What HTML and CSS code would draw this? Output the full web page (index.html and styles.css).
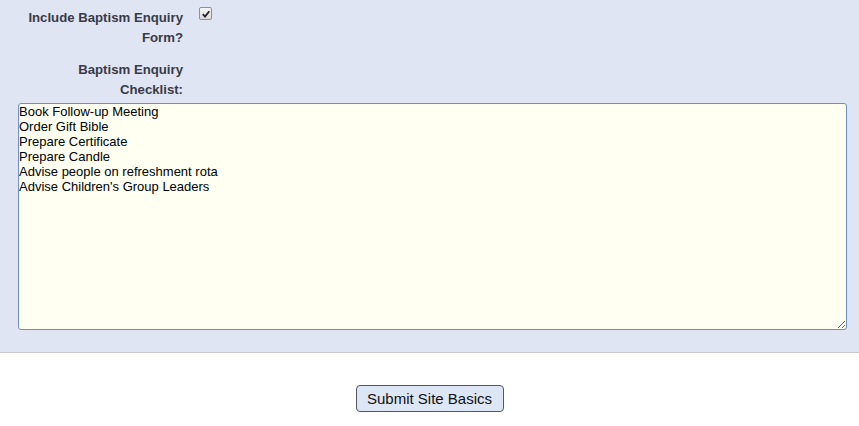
FILE: index.html
```html
<!DOCTYPE html>
<html lang="en">
<head>
<meta charset="utf-8">
<title>Site Basics</title>
<link rel="stylesheet" href="styles.css">
</head>
<body>
<form class="form">
  <div class="panel">
    <div class="row">
      <label class="label">Include Baptism Enquiry Form?</label>
      <div class="field">
        <span class="checkbox" role="checkbox" aria-checked="true">
          <svg width="8" height="8" viewBox="0 0 8 8"><path d="M0.8 4.2 L3 6.6 L7.3 1.2" fill="none" stroke="#222" stroke-width="1.8"/></svg>
        </span>
      </div>
    </div>
    <div class="row row-gap">
      <label class="label">Baptism Enquiry Checklist:</label>
    </div>
    <textarea class="checklist" spellcheck="false">Book Follow-up Meeting
Order Gift Bible
Prepare Certificate
Prepare Candle
Advise people on refreshment rota
Advise Children's Group Leaders</textarea>
  </div>
  <div class="actions">
    <button type="button" class="submit">Submit Site Basics</button>
  </div>
</form>
</body>
</html>
```
FILE: styles.css
```css
html, body {
  margin: 0;
  padding: 0;
  background: #ffffff;
}
body {
  font-family: "Liberation Sans", Arial, sans-serif;
}
.panel {
  background: #dfe5f3;
  border-bottom: 1px solid #c9c9d2;
  padding: 8px 12px 22px 18px;
  display: flex;
  flex-direction: column;
}
.row {
  display: grid;
  grid-template-columns: 165px 1fr;
  column-gap: 16px;
}
.row-gap {
  margin-top: 12px;
}
.label {
  font-size: 13.2px;
  font-weight: bold;
  line-height: 20px;
  color: #3a3a46;
  text-align: right;
}
.field {
  display: flex;
  align-items: flex-start;
}
.checkbox {
  box-sizing: border-box;
  width: 13px;
  height: 13px;
  margin-top: -1px;
  border: 1px solid #8e8f98;
  border-radius: 2px;
  background: linear-gradient(#f6f6f6, #dcdcdc);
  display: flex;
  align-items: center;
  justify-content: center;
}
.checklist {
  box-sizing: border-box;
  margin-top: 3px;
  width: 829px;
  height: 227px;
  padding: 0;
  border: 1px solid #6f8fc2;
  border-radius: 3px;
  background: #fffff2;
  font-family: "Liberation Sans", Arial, sans-serif;
  font-size: 13px;
  line-height: 15px;
  color: #000;
  outline: none;
}
.actions {
  display: flex;
  justify-content: center;
  padding-top: 32px;
}
.submit {
  box-sizing: border-box;
  height: 27px;
  width: 148px;
  padding: 0;
  border: 1px solid #55565e;
  border-radius: 4px;
  background: #dde6f5;
  font-family: "Liberation Sans", Arial, sans-serif;
  font-size: 15px;
  color: #111;
}
```
